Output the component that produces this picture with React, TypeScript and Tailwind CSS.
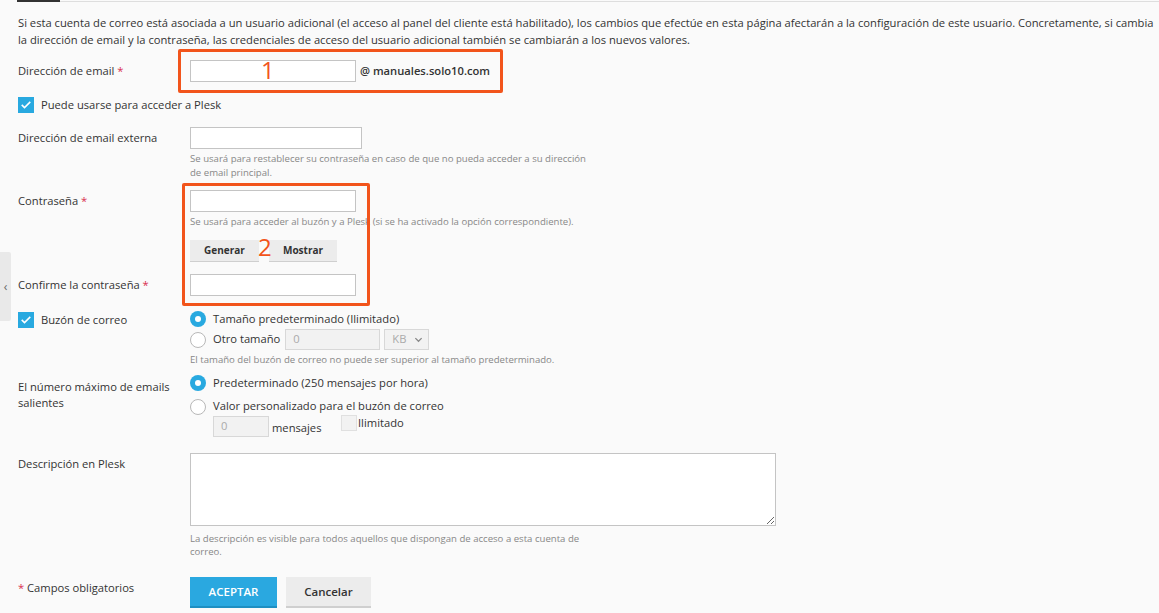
import React from "react";

const FONT = { fontFamily: '"Open Sans", "Liberation Sans", sans-serif' };

function Req() {
  return <span className="text-[#d9304f]"> *</span>;
}

function Radio({ checked }: { checked?: boolean }) {
  if (checked) {
    return (
      <span className="flex h-4 w-4 shrink-0 items-center justify-center rounded-full bg-[#28a9e0]">
        <span className="h-[6px] w-[6px] rounded-full bg-white" />
      </span>
    );
  }
  return <span className="h-4 w-4 shrink-0 rounded-full border border-[#b8b8b8] bg-white" />;
}

function CheckBox() {
  return (
    <span className="flex h-4 w-4 shrink-0 items-center justify-center bg-[#28a9e0]">
      <svg viewBox="0 0 16 16" className="h-3 w-3" fill="none" stroke="white" strokeWidth={2}>
        <path d="M3 8.5l3 3 7-7" strokeLinecap="square" />
      </svg>
    </span>
  );
}

function TextInput({ w }: { w: string }) {
  return <div className={`${w} h-[22px] border border-[#c4c4c4] bg-white`} />;
}

export default function App() {
  return (
    <div style={FONT} className="relative min-h-[613px] w-full overflow-hidden bg-[#fafafa] text-[11.2px] text-[#333]">
      {/* línea superior */}
      <div className="flex h-[3px] items-start">
        <div className="ml-[17px] h-[2px] w-[43px] bg-[#333]" />
        <div className="mt-[1px] h-px flex-1 bg-[#dedede]" />
      </div>

      <div className="pl-[18px] pr-[4px]">
        <p className="mt-[11px] leading-[17px]">
          Si esta cuenta de correo está asociada a un usuario adicional (el acceso al panel del cliente está habilitado), los cambios que efectúe en esta página afectarán a la configuración de este usuario. Concretamente, si cambia la dirección de email y la contraseña, las credenciales de acceso del usuario adicional también se cambiarán a los nuevos valores.
        </p>

        {/* email */}
        <div className="mt-[12px] flex items-center">
          <div className="w-[172px] shrink-0">
            Dirección de email<Req />
          </div>
          <TextInput w="w-[166px]" />
          <span className="ml-[4px] font-semibold">@ manuales.solo10.com</span>
        </div>

        <div className="mt-[15px] flex h-4 items-center gap-[7px]">
          <CheckBox />
          <span>Puede usarse para acceder a Plesk</span>
        </div>

        {/* email externa */}
        <div className="mt-[14px] flex items-center">
          <div className="w-[172px] shrink-0">Dirección de email externa</div>
          <TextInput w="w-[172px]" />
        </div>
        <p className="ml-[172px] mt-[3px] w-[405px] text-[9.6px] leading-[14px] text-[#888]">
          Se usará para restablecer su contraseña en caso de que no pueda acceder a su dirección de email principal.
        </p>

        {/* contraseña */}
        <div className="mt-[10px] flex items-center">
          <div className="w-[172px] shrink-0">
            Contraseña<Req />
          </div>
          <TextInput w="w-[166px]" />
        </div>
        <p className="ml-[172px] mt-[3px] text-[9.6px] leading-[14px] text-[#888]">
          Se usará para acceder al buzón y a Plesk (si se ha activado la opción correspondiente).
        </p>
        <div className="ml-[172px] mt-[11px] flex gap-[10px]">
          <button className="h-[22px] w-[69px] border-b border-[#cfcfcf] bg-[#ececec] text-[10px] font-bold text-[#333]">Generar</button>
          <button className="h-[22px] w-[68px] border-b border-[#cfcfcf] bg-[#ececec] text-[10px] font-bold text-[#333]">Mostrar</button>
        </div>

        <div className="mt-[12px] flex items-center">
          <div className="w-[172px] shrink-0">
            Confirme la contraseña<Req />
          </div>
          <TextInput w="w-[166px]" />
        </div>

        {/* buzón */}
        <div className="mt-[13px] flex">
          <div className="flex w-[172px] shrink-0 items-start gap-[7px] pt-[3px]">
            <CheckBox />
            <span className="leading-4">Buzón de correo</span>
          </div>
          <div>
            <div className="flex h-[20px] items-center gap-[7px]">
              <Radio checked />
              <span>Tamaño predeterminado (Ilimitado)</span>
            </div>
            <div className="flex h-[21px] items-center">
              <Radio />
              <span className="ml-[7px]">Otro tamaño</span>
              <div className="ml-[5px] flex h-[21px] w-[95px] items-center border border-[#d8d8d8] bg-[#f2f2f2] pl-[7px] text-[#aaa]">0</div>
              <div className="ml-[4px] flex h-[21px] w-[45px] items-center justify-between border border-[#d8d8d8] bg-[#f2f2f2] pl-[7px] pr-[5px] text-[#aaa]">
                <span>KB</span>
                <svg viewBox="0 0 10 10" className="h-[9px] w-[9px]" fill="none" stroke="#888" strokeWidth={1.4}>
                  <path d="M1.5 3.5l3.5 3.5 3.5-3.5" />
                </svg>
              </div>
            </div>
            <p className="mt-[3px] text-[9.6px] leading-[14px] text-[#888]">
              El tamaño del buzón de correo no puede ser superior al tamaño predeterminado.
            </p>
          </div>
        </div>

        {/* emails salientes */}
        <div className="mt-[6px] flex">
          <div className="w-[172px] shrink-0 pt-[6px] leading-4">
            El número máximo de emails
            <br />
            salientes
          </div>
          <div>
            <div className="flex h-[20px] items-center gap-[7px]">
              <Radio checked />
              <span>Predeterminado (250 mensajes por hora)</span>
            </div>
            <div className="mt-[4px] flex h-[19px] items-center gap-[7px]">
              <Radio />
              <span>Valor personalizado para el buzón de correo</span>
            </div>
            <div className="ml-[23px] flex items-start">
              <div className="flex h-[21px] w-[56px] items-center border border-[#d8d8d8] bg-[#f2f2f2] pl-[7px] text-[#aaa]">0</div>
              <span className="ml-[3px] w-[69px] pt-[4px] leading-4">mensajes</span>
              <span className="mt-[-1px] h-4 w-4 border border-[#e0e0e0] bg-[#f2f2f2]" />
              <span className="ml-[1px] mt-[-1px] leading-4">Ilimitado</span>
            </div>
          </div>
        </div>

        {/* descripción */}
        <div className="mt-[16px] flex">
          <div className="w-[172px] shrink-0 pt-[3px] leading-4">Descripción en Plesk</div>
          <textarea className="h-[73px] w-[586px] border border-[#c4c4c4] bg-white outline-none" />
        </div>
        <p className="ml-[172px] mt-[6px] w-[400px] text-[9.6px] leading-[13px] text-[#888]">
          La descripción es visible para todos aquellos que dispongan de acceso a esta cuenta de correo.
        </p>

        {/* acciones */}
        <div className="mt-[19px] flex items-start">
          <div className="w-[172px] shrink-0 pt-[3px] leading-4">
            <span className="text-[#d9304f]">*</span> Campos obligatorios
          </div>
          <button className="h-[31px] w-[87px] border-b-2 border-[#1e8fc2] bg-[#2aa8e0] text-[11.5px] font-semibold text-white">ACEPTAR</button>
          <button className="ml-[9px] h-[31px] w-[85px] border-b-2 border-[#cfcfcf] bg-[#ececec] text-[11.5px] font-semibold text-[#333]">Cancelar</button>
        </div>
      </div>

      {/* pestaña lateral */}
      <div className="absolute left-0 top-[252px] flex h-[69px] w-[11px] items-center justify-center rounded-r-[2px] bg-[#e9e9e9] text-[12px] text-[#666]">
        ‹
      </div>

      {/* anotaciones */}
      <div className="pointer-events-none absolute left-[178px] top-[49px] h-[44px] w-[325px] rounded-[2px] border-[3px] border-[#f2541b]" />
      <span className="pointer-events-none absolute left-[261px] top-[55px] text-[24px] leading-[30px] text-[#f2541b]">1</span>
      <div className="pointer-events-none absolute left-[182px] top-[183px] h-[123px] w-[188px] rounded-[2px] border-[3px] border-[#f2541b]" />
      <span className="pointer-events-none absolute left-[258px] top-[232px] text-[24px] leading-[30px] text-[#f2541b]">2</span>
    </div>
  );
}
